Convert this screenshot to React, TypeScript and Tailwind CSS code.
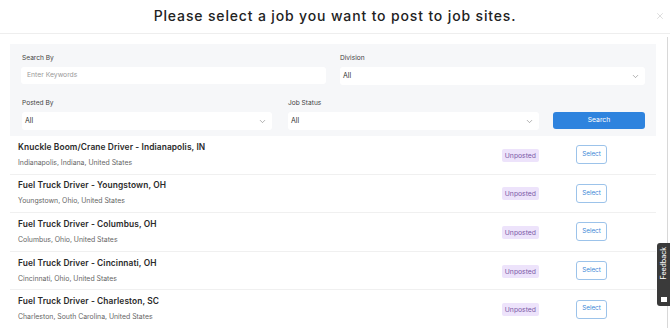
import { ChevronDown, X } from 'lucide-react'

const jobs = [
  { title: 'Knuckle Boom/Crane Driver - Indianapolis, IN', place: 'Indianapolis, Indiana, United States' },
  { title: 'Fuel Truck Driver - Youngstown, OH', place: 'Youngstown, Ohio, United States' },
  { title: 'Fuel Truck Driver - Columbus, OH', place: 'Columbus, Ohio, United States' },
  { title: 'Fuel Truck Driver - Cincinnati, OH', place: 'Cincinnati, Ohio, United States' },
  { title: 'Fuel Truck Driver - Charleston, SC', place: 'Charleston, South Carolina, United States' },
]

function SelectBox({ value, className }: { value: string; className: string }) {
  return (
    <div className={`flex items-center justify-between h-[18px] bg-white rounded-[3px] pl-[3px] pr-[5px] text-[7px] text-[#333] ${className}`}>
      <span>{value}</span>
      <ChevronDown className="w-[9px] h-[9px] text-[#777]" strokeWidth={1.5} />
    </div>
  )
}

export default function App() {
  return (
    <div className="relative w-[670px] h-[328px] overflow-hidden bg-white font-['Inter',sans-serif]">
      {/* Header */}
      <div className="relative h-[34px] flex items-center justify-center border-b border-[#eeeeee]">
        <h1 className="text-[14px] font-medium text-[#222] tracking-[0.85px] pb-[3px]">
          Please select a job you want to post to job sites.
        </h1>
        <X className="absolute right-[5px] top-[11px] w-[10px] h-[10px] text-[#c8c8c8]" strokeWidth={1.5} />
      </div>

      {/* Body */}
      <div className="pl-[10px] pr-[14px]">
        {/* Filters */}
        <div className="mt-[10px] bg-[#f6f7f9] px-[11px] pt-[9px] pb-[6px]">
          <div className="flex gap-[14px]">
            <div className="w-[305px]">
              <div className="text-[6.6px] text-[#444] h-[10px] leading-[10px] pl-[1px]">Search By</div>
              <div className="mt-[4px] h-[17px] bg-white rounded-[3px] flex items-center pl-[6px] text-[6.8px] text-[#999]">
                Enter Keywords
              </div>
            </div>
            <div className="w-[305px]">
              <div className="text-[6.6px] text-[#444] h-[10px] leading-[10px]">Division</div>
              <SelectBox value="All" className="mt-[4px] h-[17px]" />
            </div>
          </div>
          <div className="flex mt-[13px] items-end">
            <div className="w-[250px] ml-[1px]">
              <div className="text-[6.6px] text-[#444] h-[10px] leading-[10px]">Posted By</div>
              <SelectBox value="All" className="mt-[4px]" />
            </div>
            <div className="w-[251px] ml-[16px]">
              <div className="text-[6.6px] text-[#444] h-[10px] leading-[10px]">Job Status</div>
              <SelectBox value="All" className="mt-[4px]" />
            </div>
            <button className="ml-[14px] w-[92px] h-[17px] mb-[1px] bg-[#2e83de] rounded-[3px] text-white text-[6.8px]">
              Search
            </button>
          </div>
        </div>

        {/* Job rows */}
        <div>
          {jobs.map((job) => (
            <div key={job.title} className="flex items-center h-[38.6px] border-b border-[#f0f0f0] pl-[8px]">
              <div className="flex-1 -mt-[1px]">
                <div className="text-[8.4px] font-semibold text-[#2a2a2a] leading-[12px] tracking-[0.1px]">{job.title}</div>
                <div className="text-[6.9px] text-[#666] leading-[10px] mt-[5px]">{job.place}</div>
              </div>
              <span className="mr-[37px] mt-[1px] px-[3px] h-[13px] leading-[13px] rounded-[2px] bg-[#ede3fb] text-[#7b5aa6] text-[6.8px]">
                Unposted
              </span>
              <button className="mr-[49px] w-[31px] h-[19px] border border-[#9cc3ea] rounded-[3px] text-[#3a86d6] text-[6.3px]">
                Select
              </button>
            </div>
          ))}
        </div>
      </div>

      {/* Scrollbar line */}
      <div className="absolute right-[2px] top-[37px] bottom-0 w-[1px] bg-[#d8d8d8]" />

      {/* Feedback tab */}
      <div className="absolute right-0 top-[243px] w-[13px] h-[63px] bg-[#3a3a3a] rounded-l-[3px] flex flex-col items-center justify-between py-[4px]">
        <span className="text-white text-[7px] [writing-mode:vertical-rl] rotate-180 leading-none">Feedback</span>
        <span className="w-[6px] h-[5px] bg-white" />
      </div>
    </div>
  )
}
